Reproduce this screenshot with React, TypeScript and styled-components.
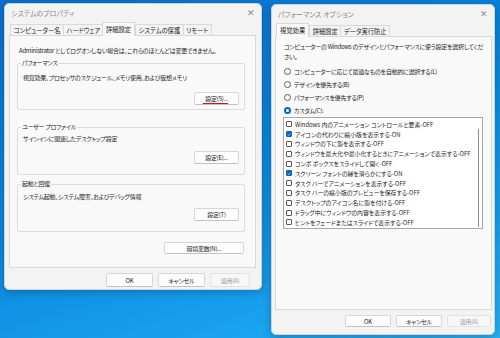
import React from "react";
import styled, { createGlobalStyle, css } from "styled-components";

const GlobalStyle = createGlobalStyle`
  html, body { margin: 0; padding: 0; width: 500px; height: 338px; overflow: hidden; }
  body {
    background: linear-gradient(160deg, #0a6fcf 0%, #0b86dd 45%, #19a2ee 80%, #2bb0f2 100%);
    font-family: "Noto Sans CJK JP", "Noto Sans", sans-serif;
    color: #1b1b1b;
    font-feature-settings: "palt";
  }
  * { box-sizing: border-box; }
`;

const Desktop = styled.div`
  display: flex;
  align-items: flex-start;
  gap: 9px;
  padding: 3px 0 0 4px;
  height: 338px;
`;

const Window = styled.div<{ $w: number; $h: number; $top?: number }>`
  width: ${(p) => p.$w}px;
  height: ${(p) => p.$h}px;
  margin-top: ${(p) => p.$top ?? 0}px;
  background: #f3f3f3;
  border: 1px solid #c9d3dc;
  border-radius: 5px;
  box-shadow: 0 2px 8px rgba(0, 0, 0, 0.25);
  display: flex;
  flex-direction: column;
  overflow: hidden;
`;

const TitleBar = styled.div`
  height: 17px;
  flex: none;
  display: flex;
  align-items: center;
  justify-content: space-between;
  padding: 0 6px 0 6px;
  font-size: 7px;
  color: #8a8a8a;
`;

const Close = styled.span`
  font-size: 9px;
  color: #8f8f8f;
  font-family: "DejaVu Sans", sans-serif;
  font-weight: 200;
`;

const TabRow = styled.div<{ $pad: number }>`
  display: flex;
  align-items: flex-end;
  height: 14px;
  flex: none;
  padding-left: ${(p) => p.$pad}px;
  position: relative;
  z-index: 1;
`;

const Tab = styled.div<{ $active?: boolean }>`
  font-size: 6.3px;
  line-height: 11px;
  height: 11px;
  padding: 0 2.5px;
  border: 1px solid #d9d9d9;
  border-bottom: none;
  margin-right: -1px;
  background: #f3f3f3;
  white-space: nowrap;
  ${(p) =>
    p.$active &&
    css`
      height: 14px;
      line-height: 13px;
      background: #f9f9f9;
      padding: 0 3px;
      margin: 0 0 -1px -1px;
      z-index: 2;
    `}
`;

const Panel = styled.div<{ $h: number; $ml: number; $mr: number }>`
  height: ${(p) => p.$h}px;
  flex: none;
  margin: 0 ${(p) => p.$mr}px 0 ${(p) => p.$ml}px;
  background: #f9f9f9;
  border: 1px solid #d9d9d9;
  display: flex;
  flex-direction: column;
`;

const bodyFont = css`
  font-size: 6px;
  letter-spacing: -0.25px;
`;

const Text = styled.div<{ $mt?: number; $ml?: number }>`
  ${bodyFont};
  line-height: 10px;
  margin-top: ${(p) => p.$mt ?? 0}px;
  margin-left: ${(p) => p.$ml ?? 0}px;
  white-space: nowrap;
`;

const Group = styled.fieldset<{ $h: number; $mt: number }>`
  margin: ${(p) => p.$mt}px 10px 0 7px;
  height: ${(p) => p.$h}px;
  border: 1px solid #dcdcdc;
  border-radius: 2px;
  padding: 0 5px 0 5px;
  display: flex;
  flex-direction: column;
  min-width: 0;
`;

const Legend = styled.legend`
  ${bodyFont};
  line-height: 8px;
  padding: 0 1px;
  margin-left: -2px;
`;

const ButtonRow = styled.div<{ $mt?: number; $pr?: number }>`
  display: flex;
  justify-content: flex-end;
  margin-top: ${(p) => p.$mt ?? 0}px;
  padding-right: ${(p) => p.$pr ?? 0}px;
`;

const Button = styled.button<{ $w: number; $h?: number; $disabled?: boolean }>`
  width: ${(p) => p.$w}px;
  height: ${(p) => p.$h ?? 13}px;
  padding: 0;
  font-family: inherit;
  font-feature-settings: "palt";
  ${bodyFont};
  color: ${(p) => (p.$disabled ? "#a0a0a0" : "#1b1b1b")};
  background: #fdfdfd;
  border: 1px solid #d6d6d6;
  border-bottom-color: #c2c2c2;
  border-radius: 2px;
  position: relative;
  ${(p) =>
    p.$disabled &&
    css`
      background: #f7f7f7;
      border-color: #e2e2e2;
    `}
`;

const RedMark = styled.span`
  position: absolute;
  left: 8px;
  right: 10px;
  bottom: 0px;
  height: 1px;
  background: #e01010;
`;

const Footer = styled.div<{ $pr: number; $pt: number }>`
  flex: 1;
  display: flex;
  justify-content: flex-end;
  align-items: flex-start;
  gap: 5px;
  padding: ${(p) => p.$pt}px ${(p) => p.$pr}px 0 0;
`;

const RadioRow = styled.div<{ $mt: number }>`
  display: flex;
  align-items: center;
  gap: 3px;
  margin: ${(p) => p.$mt}px 0 0 8px;
  ${bodyFont};
  line-height: 9px;
  white-space: nowrap;
`;

const Radio = styled.span<{ $on?: boolean }>`
  width: 7px;
  height: 7px;
  border-radius: 50%;
  flex: none;
  border: 1px solid #5c5c5c;
  background: #fff;
  ${(p) =>
    p.$on &&
    css`
      border: 2px solid #0a64c2;
    `}
`;

const ListBox = styled.div`
  margin: 2.5px 8px 0 7px;
  height: 112px;
  background: #fff;
  border: 1px solid #a8a8a8;
  display: flex;
  padding: 1.5px 0 0 2px;
`;

const List = styled.div`
  flex: 1;
  display: flex;
  flex-direction: column;
`;

const Item = styled.div`
  display: flex;
  align-items: center;
  gap: 3px;
  height: 9.8px;
  font-size: 5.9px;
  white-space: nowrap;
`;

const Check = styled.span<{ $on?: boolean }>`
  width: 6px;
  height: 6px;
  flex: none;
  border: 1px solid #555;
  border-radius: 1px;
  background: #fff;
  display: flex;
  align-items: center;
  justify-content: center;
  ${(p) =>
    p.$on &&
    css`
      background: #0a64c2;
      border-color: #0a64c2;
    `}
`;

const ScrollTrack = styled.div`
  width: 7px;
  flex: none;
  display: flex;
  flex-direction: column;
  align-items: center;
  padding: 9px 0 1px;
`;

const Thumb = styled.div`
  width: 1.5px;
  background: #8d8d8d;
  border-radius: 1px;
  flex: 1;
`;

const items: [string, boolean][] = [
  ["Windows 内のアニメーション コントロールと要素-OFF", false],
  ["アイコンの代わりに縮小版を表示する-ON", true],
  ["ウィンドウの下に影を表示する-OFF", false],
  ["ウィンドウを最大化や最小化するときにアニメーションで表示する-OFF", false],
  ["コンボ ボックスをスライドして開く-OFF", false],
  ["スクリーン フォントの縁を滑らかにする-ON", true],
  ["タスク バーでアニメーションを表示する-OFF", false],
  ["タスク バーの縮小版のプレビューを保存する-OFF", false],
  ["デスクトップのアイコン名に影を付ける-OFF", false],
  ["ドラッグ中にウィンドウの内容を表示する-OFF", false],
  ["ヒントをフェードまたはスライドで表示する-OFF", false],
];

const CheckMark = () => (
  <svg width="5" height="5" viewBox="0 0 10 10">
    <path d="M2 5.2 L4.2 7.4 L8.2 2.8" fill="none" stroke="#fff" strokeWidth="1.6" />
  </svg>
);

export default function App() {
  return (
    <>
      <GlobalStyle />
      <Desktop>
        <Window $w={258} $h={287}>
          <TitleBar>
            <span>システムのプロパティ</span>
            <Close>✕</Close>
          </TitleBar>
          <TabRow $pad={5}>
            <Tab>コンピューター名</Tab>
            <Tab>ハードウェア</Tab>
            <Tab $active>詳細設定</Tab>
            <Tab>システムの保護</Tab>
            <Tab>リモート</Tab>
          </TabRow>
          <Panel $h={233} $ml={4} $mr={5}>
            <Text $mt={10} $ml={9}>
              Administrator としてログオンしない場合は、これらのほとんどは変更できません。
            </Text>
            <Group $h={51} $mt={3}>
              <Legend>パフォーマンス</Legend>
              <Text $mt={6}>視覚効果、プロセッサのスケジュール、メモリ使用、および仮想メモリ</Text>
              <ButtonRow $mt={9}>
                <Button $w={45}>
                  設定(S)...
                  <RedMark />
                </Button>
              </ButtonRow>
            </Group>
            <Group $h={52} $mt={13}>
              <Legend>ユーザー プロファイル</Legend>
              <Text $mt={3}>サインインに関連したデスクトップ設定</Text>
              <ButtonRow $mt={7}>
                <Button $w={45}>設定(E)...</Button>
              </ButtonRow>
            </Group>
            <Group $h={52} $mt={5}>
              <Legend>起動と回復</Legend>
              <Text $mt={4}>システム起動、システム障害、およびデバッグ情報</Text>
              <ButtonRow $mt={6}>
                <Button $w={45}>設定(T)</Button>
              </ButtonRow>
            </Group>
            <ButtonRow $mt={10} $pr={11}>
              <Button $w={80} $h={12}>環境変数(N)...</Button>
            </ButtonRow>
          </Panel>
          <Footer $pr={11} $pt={5}>
            <Button $w={47} $h={14}>OK</Button>
            <Button $w={47} $h={14}>キャンセル</Button>
            <Button $w={40} $h={14} $disabled>適用(A)</Button>
          </Footer>
        </Window>

        <Window $w={224} $h={331} $top={1}>
          <TitleBar>
            <span>パフォーマンス オプション</span>
            <Close>✕</Close>
          </TitleBar>
          <TabRow $pad={5}>
            <Tab $active>視覚効果</Tab>
            <Tab>詳細設定</Tab>
            <Tab>データ実行防止</Tab>
          </TabRow>
          <Panel $h={274} $ml={3} $mr={2}>
            <Text $mt={5} $ml={8}>
              コンピューターの Windows のデザインとパフォーマンスに使う設定を選択してくだ
            </Text>
            <Text $ml={8}>さい。</Text>
            <RadioRow $mt={4.5}>
              <Radio />
              コンピューターに応じて最適なものを自動的に選択する(L)
            </RadioRow>
            <RadioRow $mt={4}>
              <Radio />
              デザインを優先する(B)
            </RadioRow>
            <RadioRow $mt={4}>
              <Radio />
              パフォーマンスを優先する(P)
            </RadioRow>
            <RadioRow $mt={4}>
              <Radio $on />
              カスタム(C):
            </RadioRow>
            <ListBox>
              <List>
                {items.map(([t, on]) => (
                  <Item key={t}>
                    <Check $on={on}>{on && <CheckMark />}</Check>
                    {t}
                  </Item>
                ))}
              </List>
              <ScrollTrack>
                <Thumb />
              </ScrollTrack>
            </ListBox>
          </Panel>
          <Footer $pr={3} $pt={5}>
            <Button $w={46} $h={12}>OK</Button>
            <Button $w={46} $h={12}>キャンセル</Button>
            <Button $w={44} $h={12} $disabled>適用(A)</Button>
          </Footer>
        </Window>
      </Desktop>
    </>
  );
}
